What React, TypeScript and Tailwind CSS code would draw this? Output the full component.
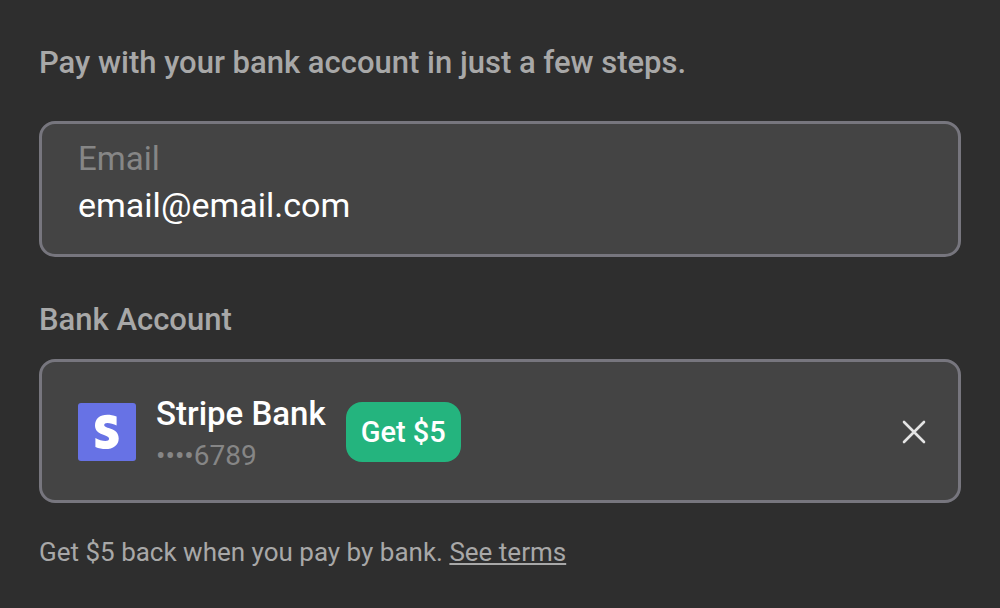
export default function App() {
  return (
    <main className="flex min-h-screen flex-col bg-[#2e2e2e] px-[39px] pt-[43px] font-['Roboto',sans-serif]">
      <h1 className="text-[31px] leading-10 font-medium text-[#a8a8a8]">
        Pay with your bank account in just a few steps.
      </h1>
      <div className="mt-[38px] flex flex-col rounded-2xl border-3 border-[#77767e] bg-[#444444] px-9 pt-[15px] pb-[25px]">
        <label htmlFor="email" className="text-[33px] leading-10 text-[#868686]">
          Email
        </label>
        <input
          id="email"
          type="email"
          defaultValue="email@email.com"
          className="mt-[2px] h-12 w-full bg-transparent text-[34px] leading-12 text-white outline-none"
        />
      </div>
      <h2 className="mt-[43px] text-[31px] leading-10 font-medium text-[#a8a8a8]">Bank Account</h2>
      <section className="mt-[19px] flex items-center rounded-2xl border-3 border-[#77767e] bg-[#444444] pt-[25px] pr-8 pb-[23px] pl-9">
        <svg viewBox="0 0 58 58" className="size-[58px]" role="img" aria-label="Stripe">
          <rect width="58" height="58" rx="3" fill="#6772e5" />
          <path
            d="M26.2 22.1c0-1.4 1.2-2.1 3.1-2.1 2.8 0 6.400 1 9.300 2.500v-9c-3.100-1.300-6.200-1.800-9.300-1.800-7.400 0-12.300 4-12.300 10.700 0 10.400 14.100 8.700 14.100 13.200 0 1.800-1.600 2.400-3.600 2.400-3.100 0-7-1.300-10.100-3.100v9.100c3.400 1.500 6.900 2.100 10.100 2.100 7.700 0 13.200-4 13.200-10.700 0-11.200-14.500-9.200-14.500-13.300z"
            fill="#fff"
          />
        </svg>
        <div className="ml-5 pt-[7px]">
          <div className="text-[33px] leading-10 font-medium text-white">Stripe Bank</div>
          <div className="text-[28px] leading-[43px] text-[#868686]">••••6789</div>
        </div>
        <span className="ml-5 rounded-2xl bg-[#24b47e] px-[15px] py-[10px] text-[29px] leading-10 font-medium text-white">
          Get $5
        </span>
        <button type="button" aria-label="Remove bank account" className="ml-auto text-[#e4e4e4]">
          <svg viewBox="0 0 24 24" className="size-6" fill="none" stroke="currentColor" strokeWidth="2.600" strokeLinecap="round">
            <path d="M2 2 22 22M22 2 2 22" />
          </svg>
        </button>
      </section>
      <p className="mt-[29px] text-[26px] leading-10 text-[#a8a8a8]">
        Get $5 back when you pay by bank.{" "}
        <a href="#terms" className="underline">
          See terms
        </a>
      </p>
    </main>
  );
}
